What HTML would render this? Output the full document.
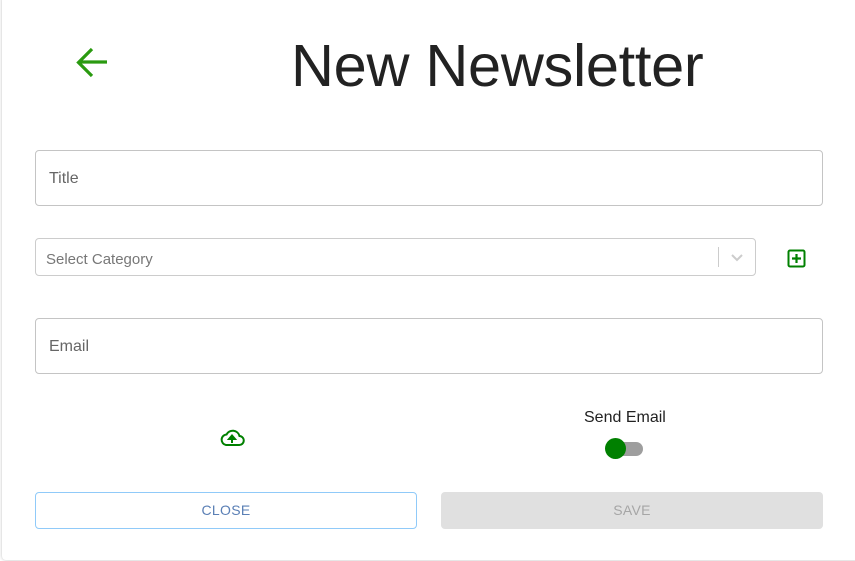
<!DOCTYPE html>
<html style="overflow:hidden"><head><style>
html,body{overflow:hidden}
body{margin:0;width:855px;height:561px;background:#fff;font-family:"Liberation Sans",Arial,sans-serif;position:relative}
.card{position:absolute;left:2px;top:-4px;width:860px;height:564px;border-radius:4px;box-shadow:0 0 3px rgba(0,0,0,.25);background:#fff}
.abs{position:absolute}
.field{position:absolute;left:35px;width:786px;height:54px;border:1px solid #c4c4c4;border-radius:4px;color:#666;font-size:16px;line-height:56px;padding-left:13px;box-sizing:content-box}
</style></head><body>
<div class="card"></div>
<svg class="abs" style="left:74px;top:45px" width="36" height="36" viewBox="0 0 36 36"><path d="M33 17H5M18 4L4.5 17.5 18 31" stroke="#2a9a10" stroke-width="3.2" fill="none"/></svg>
<div class="abs" style="left:291px;top:31px;font-size:59.5px;color:#222;line-height:70px;letter-spacing:-0.3px">New Newsletter</div>
<div class="field" style="top:150px;width:773px">Title</div>
<div class="abs" style="left:35px;top:238px;border:1px solid #ccc;border-radius:4px;font-size:15px;color:#777;line-height:41px;padding-left:10px;box-sizing:border-box;width:721px;height:38px">Select Category
<div class="abs" style="left:682px;top:8px;width:1px;height:20px;background:#ccc"></div>
<svg class="abs" style="left:694px;top:11px" width="14" height="14" viewBox="0 0 14 14"><path d="M2 5l5 5 5-5" stroke="#ccc" stroke-width="2" fill="none"/></svg>
</div>
<svg class="abs" style="left:787px;top:249px" width="19" height="19" viewBox="0 0 19 19"><rect x="1.5" y="1.5" width="16" height="16" rx="1.5" fill="none" stroke="#008000" stroke-width="2"/><path d="M9.5 5v9M5 9.5h9" stroke="#008000" stroke-width="2.2"/></svg>
<div class="field" style="top:318px;width:773px">Email</div>
<svg class="abs" style="left:219px;top:428px" width="26" height="20" viewBox="0 0 26 20"><path d="M7 17h13a4.5 4.5 0 0 0 .5-9A7 7 0 0 0 7.5 6.5 5.3 5.3 0 0 0 7 17z" fill="none" stroke="#008000" stroke-width="2"/><path d="M13 15V10M10 11l3-3.5 3 3.5z" stroke="#008000" stroke-width="2" fill="#008000"/></svg>
<div class="abs" style="left:584px;top:409px;font-size:16px;color:#222">Send Email</div>
<div class="abs" style="left:607px;top:442px;width:36px;height:14px;border-radius:7px;background:#9e9e9e"></div>
<div class="abs" style="left:605px;top:438px;width:21px;height:21px;border-radius:50%;background:#008000"></div>
<div class="abs" style="left:35px;top:492px;width:382px;height:37px;border:1px solid #90caf9;border-radius:4px;box-sizing:border-box;color:#5a7fb5;font-size:14px;text-align:center;line-height:35px;letter-spacing:.3px">CLOSE</div>
<div class="abs" style="left:441px;top:492px;width:382px;height:37px;background:#e0e0e0;border-radius:4px;color:#a6a6a6;font-size:14px;text-align:center;line-height:37px;letter-spacing:.3px">SAVE</div>
</body></html>
